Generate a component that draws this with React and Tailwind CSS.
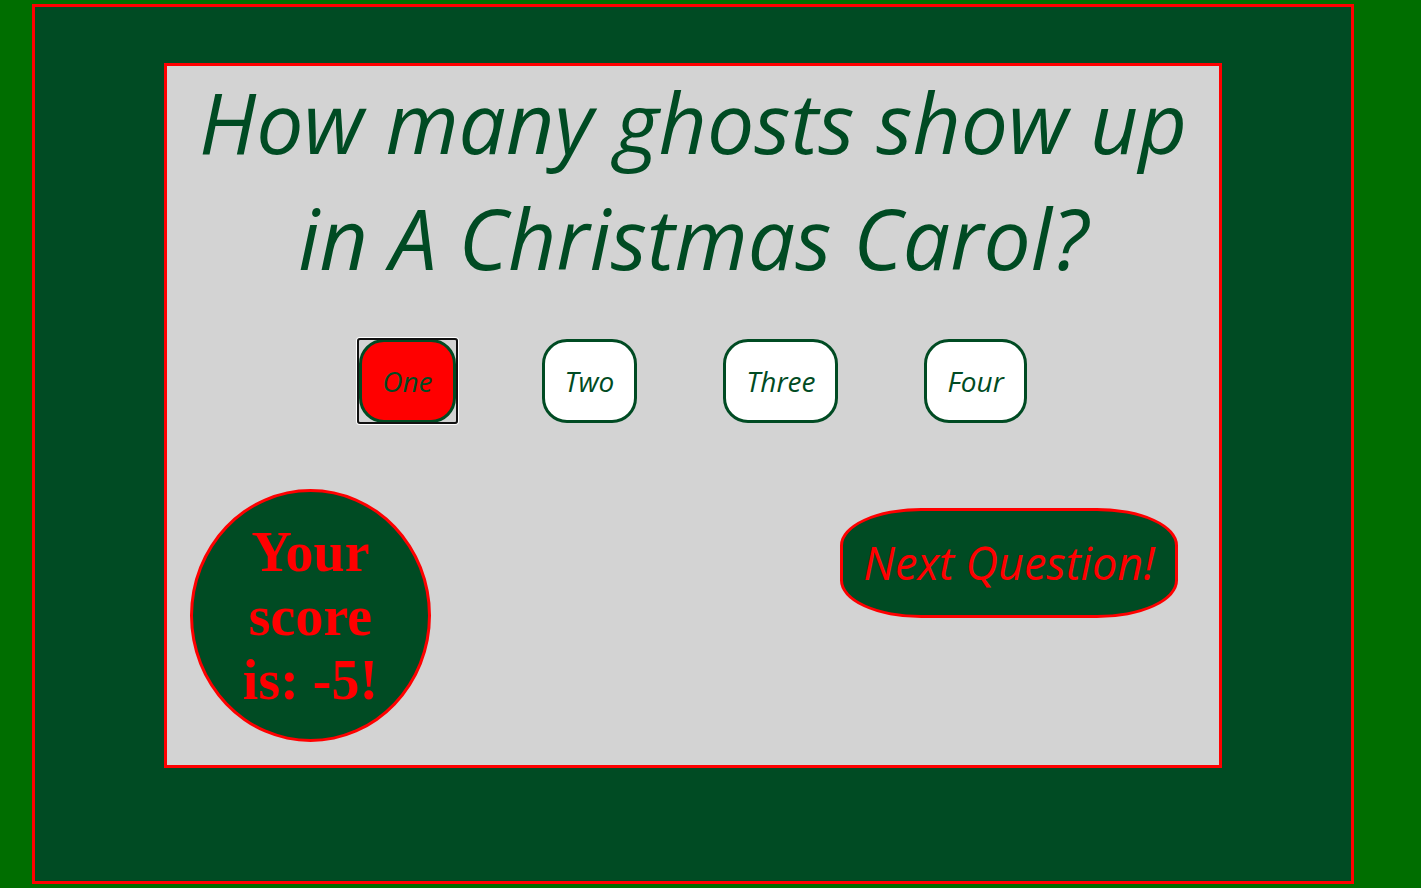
import React from "react";

const os = { fontFamily: '"Open Sans", "Liberation Sans", sans-serif' };
const serif = { fontFamily: '"Liberation Serif", "Times New Roman", serif' };

function Option({ label, selected }) {
  const btn = (
    <button
      style={os}
      className={
        "h-[84px] px-[20px] rounded-[25px] border-[3px] border-[#004b23] text-[28px] italic text-[#004b23] leading-[38px] " +
        (selected ? "bg-[#ff0000]" : "bg-white")
      }
    >
      {label}
    </button>
  );
  if (!selected) return btn;
  return (
    <div className="relative">
      {btn}
      <div className="absolute -inset-x-[2px] -inset-y-[1px] rounded-[3px] border-2 border-[#111] shadow-[0_0_0_1px_white] pointer-events-none" />
    </div>
  );
}

export default function App() {
  return (
    <div className="min-h-[888px] w-full bg-[#006e00] pt-[4px] pl-[32px] overflow-hidden">
      <div className="w-[1322px] h-[880px] border-[3px] border-[#ff0000] bg-[#004b23] pt-[56px]">
        <div className="mx-auto w-[1058px] h-[705px] border-[3px] border-[#ff0000] bg-[#d3d3d3] flex flex-col">
          <h1
            style={os}
            className="mt-[-2px] text-center italic text-[84px] leading-[116px] text-[#004b23] font-normal"
          >
            How many ghosts show up
            <br />
            in A Christmas Carol?
          </h1>
          <div className="mt-[43px] flex justify-center gap-[86px]">
            <Option label="One" selected />
            <Option label="Two" />
            <Option label="Three" />
            <Option label="Four" />
          </div>
          <div className="mt-[66px] flex items-start justify-between pl-[23px] pr-[41px]">
            <div
              style={serif}
              className="w-[241px] h-[253px] rounded-[50%] border-[3px] border-[#ff0000] bg-[#004b23] flex items-center justify-center text-center text-[56px] leading-[64px] font-bold text-[#ff0000]"
            >
              <div>
                Your
                <br />
                score
                <br />
                is: -5!
              </div>
            </div>
            <button
              style={os}
              className="mt-[19px] w-[338px] h-[110px] rounded-[24%/34%] border-[3px] border-[#ff0000] bg-[#004b23] flex items-center justify-center italic text-[45px] leading-[60px] text-[#ff0000]"
            >
              Next Question!
            </button>
          </div>
        </div>
      </div>
    </div>
  );
}
